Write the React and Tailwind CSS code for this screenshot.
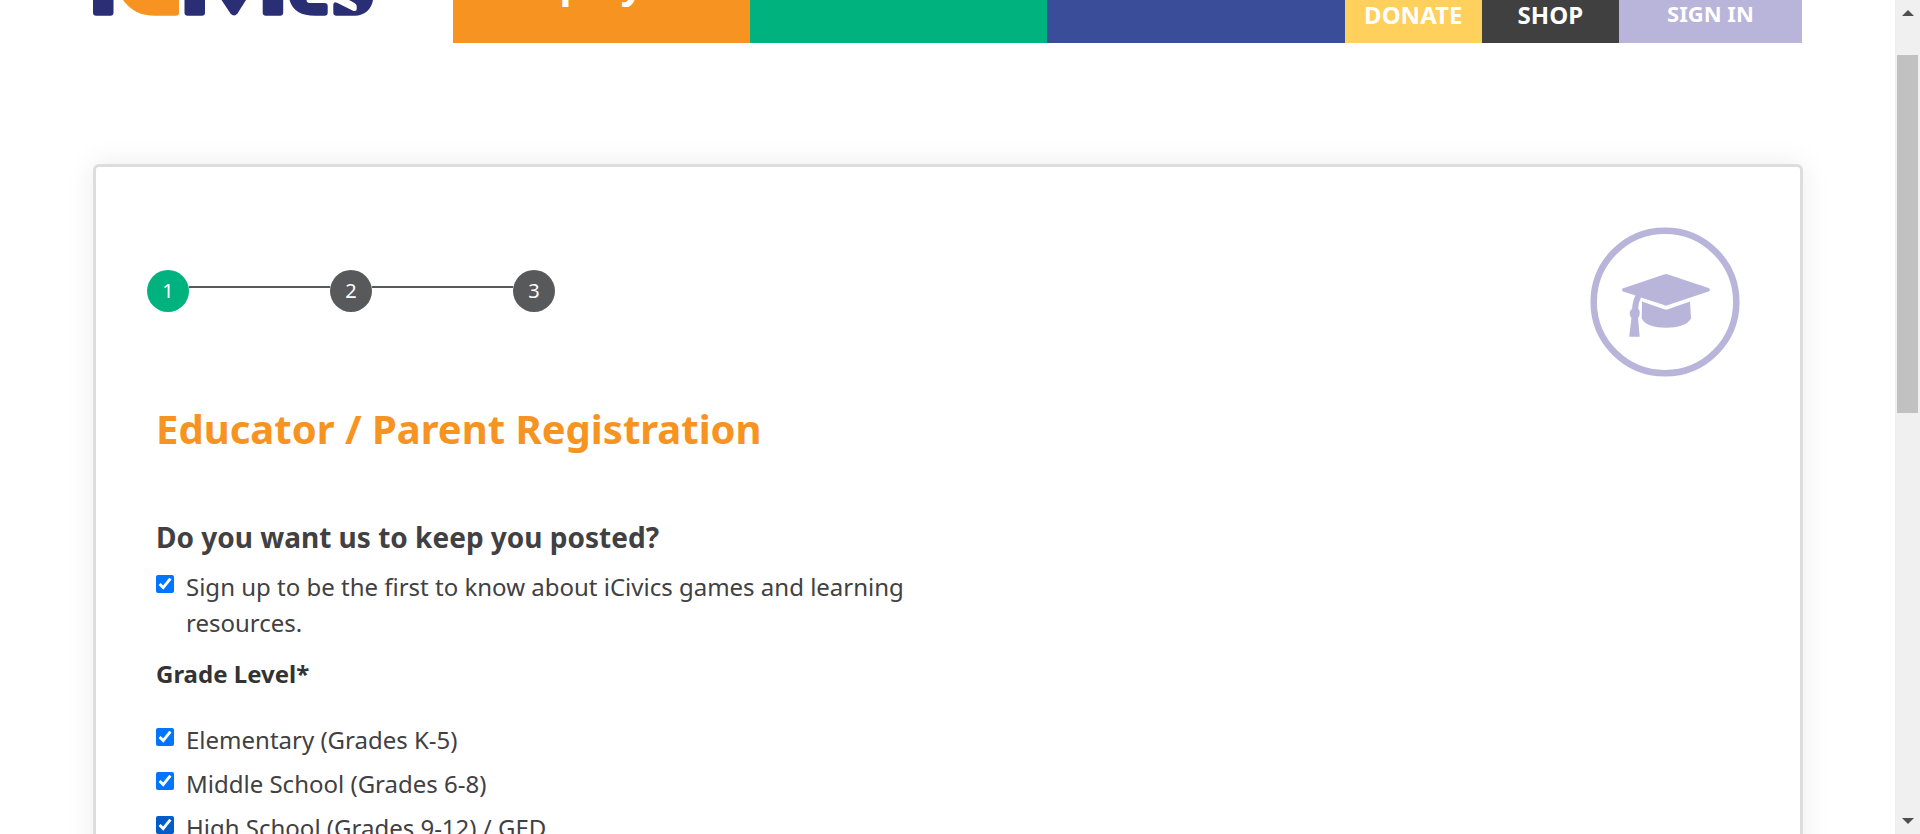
import React from "react";

const sections = [
  { id: "play", text: "play", className: "bg-[#f79320]" },
  { id: "teach", className: "bg-[#00b27e]" },
  { id: "about", className: "bg-[#394d99]" },
];

const steps = [1, 2, 3];

function Logo() {
  return (
    <a href="#home" aria-label="iCivics home" className="shrink-0">
      <svg viewBox="0 0 281 16" className="block h-4 w-[281px]" fill="#2a2e75" aria-hidden="true">
        <path d="M0 0H20.500V12.500Q20.500 15.700 17.300 15.700H3.200Q0 15.700 0 12.500Z" />
        <path fill="#f79320" d="M30 0H86V12.700Q86 15.700 83 15.700H62C48 15.700 38 11 30 0Z" />
        <path d="M91.500 0H112V12.500Q112 15.700 108.800 15.700H94.700Q91.500 15.700 91.500 12.500Z" />
        <path d="M128.500 0H153L144.500 13.500Q141 17.500 137.500 13.500Z" />
        <path d="M169.700 0H190.200V12.500Q190.200 15.700 187 15.700H172.900Q169.700 15.700 169.700 12.500Z" />
        <path d="M196.500 0H213.500Q213.700 3 216.500 3H231.500Q234.700 3 234.700 6.200V12.500Q234.700 15.700 231.500 15.700H222C208.500 15.700 199.500 11 196.500 0Z" />
        <path d="M256 0H280C278.500 9.500 271 15.700 262 15.700H243.500Q240.300 15.700 240.300 12.500V5Q240.300 1 244 2.800L260 10.700Q263.700 12 263.700 9V6Q263.700 3.500 256 0Z" />
      </svg>
    </a>
  );
}

function Header() {
  return (
    <header className="flex h-[43px] items-start overflow-hidden pr-px">
      <Logo />
      <nav className="ml-[79px] flex h-full flex-1 text-2xl font-bold text-white">
        {sections.map((s) => (
          <a
            key={s.id}
            href={"#" + s.id}
            aria-label={s.id}
            className={"flex flex-[297] flex-col justify-end pb-10 text-center text-[40px] leading-10 " + s.className}
          >
            {s.text}
          </a>
        ))}
        <a href="#donate" className="flex-[137] bg-[#ffd05c] text-center leading-[30px]">DONATE</a>
        <a href="#shop" className="flex-[137] bg-[#404040] text-center leading-[30px]">SHOP</a>
        <a href="#signin" className="flex-[183] bg-[#b9b4da] text-center text-[22px] leading-[26px]">SIGN IN</a>
      </nav>
    </header>
  );
}

function Steps() {
  return (
    <ol className="-ml-[9px] mt-[43px] flex items-start text-xl leading-[42px] text-white">
      {steps.map((n) => (
        <li key={n} className="flex">
          {n > 1 && <span className="mt-4 h-0.5 w-[141px] bg-[#58595b]" />}
          <span
            className={
              "size-[42px] rounded-full text-center " + (n === 1 ? "bg-[#00b27e]" : "bg-[#58595b]")
            }
          >
            {n}
          </span>
        </li>
      ))}
    </ol>
  );
}

function EducatorBadge() {
  return (
    <svg viewBox="0 0 150 150" className="size-[150px]" fill="#b9b4da" role="img" aria-label="Educator">
      <circle cx="75" cy="75" r="71.300" fill="none" stroke="#b9b4da" strokeWidth="6.500" />
      <path d="M32.500 61.500L74 47.500Q76 46.500 78 47.500L118.500 61Q121.500 63 118.500 64.500L78 78Q76 79 74 78L51 70.500Q48.500 75 48.200 81.500Q51.500 86 48 91L49.700 109.700H39.200L41.500 91Q37.500 86 42.200 81.500Q42.500 74 45.500 68.600L33 64.500Q31 63 32.500 61.500Z" />
      <path d="M52 74.500L74 82.200Q76 83 78 82.200L100 74.500L101 91.500C97.500 98 88 100.700 76 100.700S55 98 51.700 91.500Z" />
    </svg>
  );
}

function Check({ id, children, dark }) {
  return (
    <div className="flex items-start gap-3">
      <input
        id={id}
        type="checkbox"
        defaultChecked
        className={"mt-1.5 size-[18px] shrink-0 " + (dark ? "accent-[#005cc8]" : "accent-[#0075ff]")}
      />
      <label htmlFor={id} className="leading-9">
        {children}
      </label>
    </div>
  );
}

function ScrollRail() {
  return (
    <div aria-hidden="true" className="flex w-[25px] shrink-0 flex-col items-center bg-[#f0f0f0]">
      <svg viewBox="0 0 12 6" className="mt-2.5 h-1.5 w-3" fill="#505050">
        <path d="M6 0L12 6H0Z" />
      </svg>
      <div className="mt-[39px] h-[358px] w-[21px] bg-[#c1c1c1]" />
      <svg viewBox="0 0 12 6" className="mb-2.5 mt-auto h-1.5 w-3" fill="#505050">
        <path d="M0 0H12L6 6Z" />
      </svg>
    </div>
  );
}

export default function App() {
  return (
    <div className="flex h-screen overflow-hidden bg-white font-['Noto_Sans',sans-serif] text-[#414042]">
      <div className="flex-1 overflow-hidden pl-[93px] pr-[92px]">
        <Header />
        <main className="mt-[121px] rounded-md border-3 border-[#ddd] px-[60px] pb-16 pt-[60px] shadow-[0_0_30px_rgba(0,0,0,0.08)]">
          <div className="flex items-start justify-between">
            <Steps />
            <EducatorBadge />
          </div>
          <h1 className="mt-[26px] text-[40px] font-bold leading-[52px] text-[#f79320]">
            Educator / Parent Registration
          </h1>
          <form className="text-2xl">
            <h2 className="mt-[62px] text-[28px] font-bold leading-10">Do you want us to keep you posted?</h2>
            <div className="mt-3 max-w-[780px]">
              <Check id="updates">
                Sign up to be the first to know about iCivics games and learning resources.
              </Check>
            </div>
            <fieldset className="mt-[15px]">
              <legend className="font-bold leading-9 text-[#333]">Grade Level*</legend>
              <div className="mt-[30px] flex flex-col gap-2">
                <Check id="elementary">Elementary (Grades K-5)</Check>
                <Check id="middle">Middle School (Grades 6-8)</Check>
                <Check id="high" dark>High School (Grades 9-12) / GED</Check>
              </div>
            </fieldset>
          </form>
        </main>
      </div>
      <ScrollRail />
    </div>
  );
}
